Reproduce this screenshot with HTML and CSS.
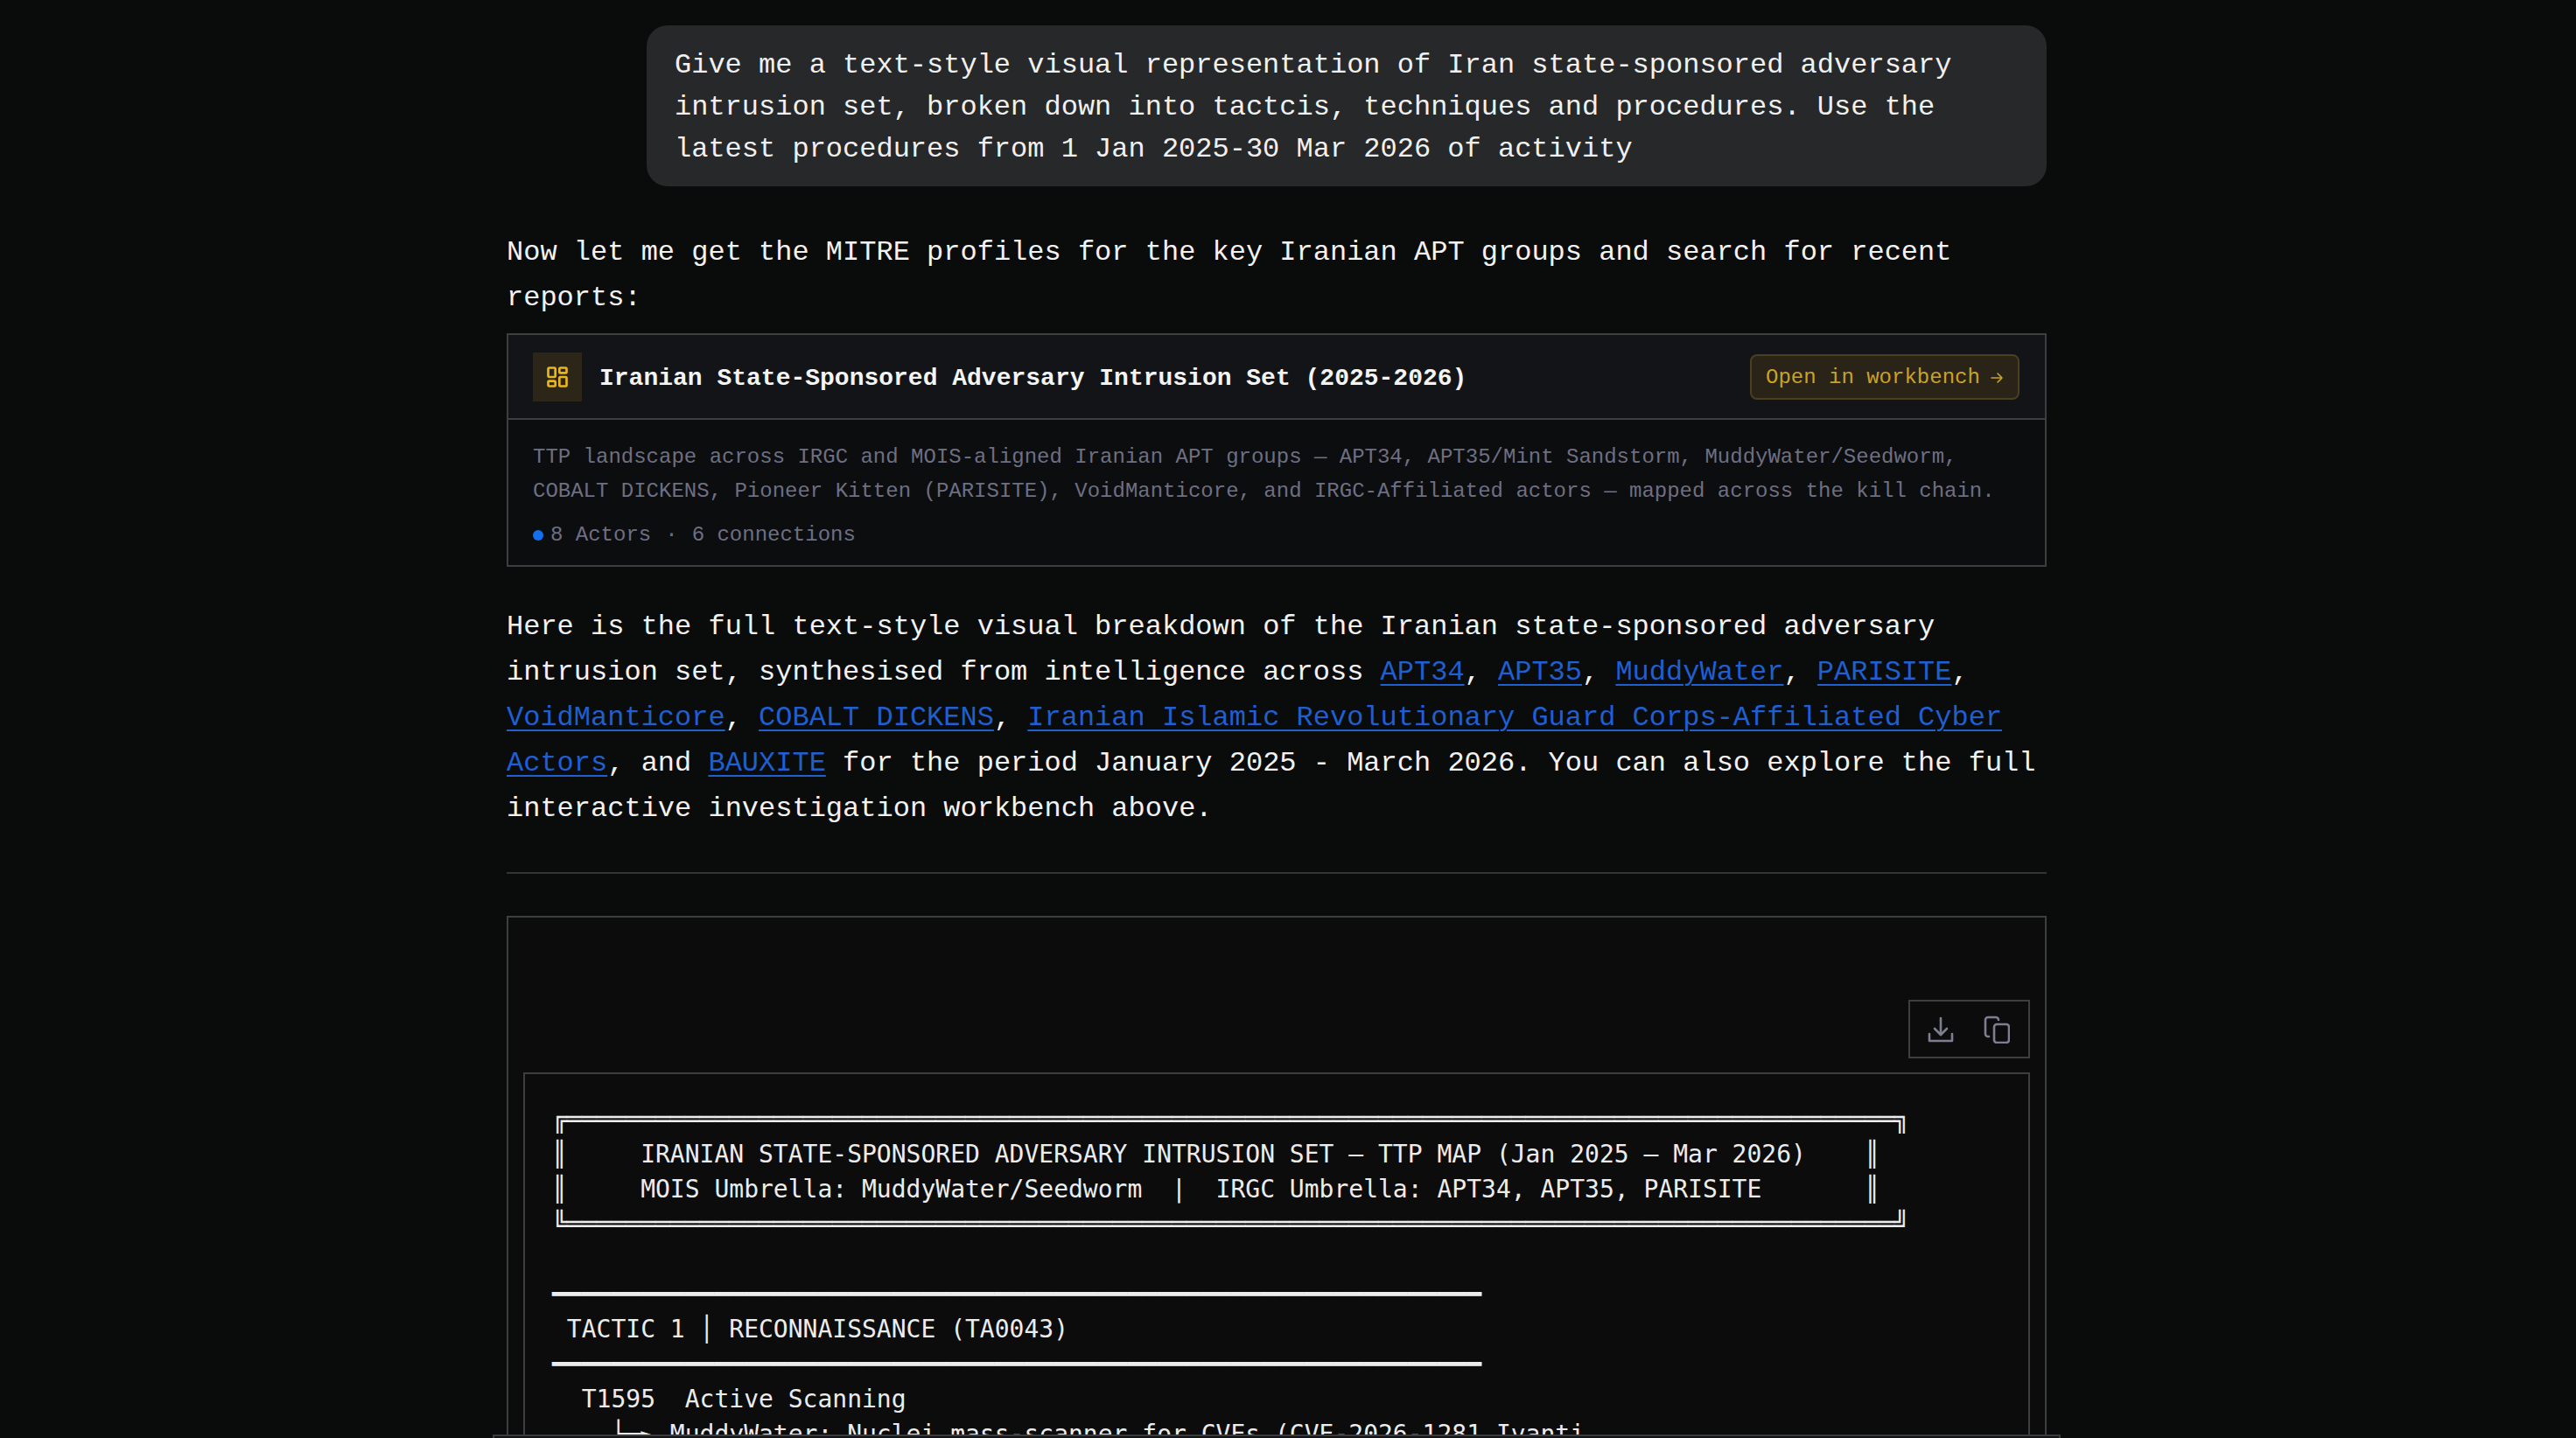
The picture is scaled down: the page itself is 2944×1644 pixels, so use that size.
FILE: index.html
```html
<!DOCTYPE html>
<html lang="en">
<head>
<meta charset="utf-8">
<title>Iranian State-Sponsored Adversary Intrusion Set</title>
<link rel="stylesheet" href="styles.css">
</head>
<body>
<main class="thread">
  <div class="user-bubble">Give me a text-style visual representation of Iran state-sponsored adversary intrusion set, broken down into tactcis, techniques and procedures. Use the latest procedures from 1 Jan 2025-30 Mar 2026 of activity</div>
  <p class="para para-intro">Now let me get the MITRE profiles for the key Iranian APT groups and search for recent reports:</p>
  <section class="card">
    <header class="card-head">
      <span class="card-icon">
        <svg width="28" height="28" viewBox="0 0 24 24" fill="none" stroke="currentColor" stroke-width="2.3" stroke-linejoin="round"><rect x="3" y="3" width="7" height="9" rx="1"/><rect x="14" y="3" width="7" height="5" rx="1"/><rect x="14" y="12" width="7" height="9" rx="1"/><rect x="3" y="16" width="7" height="5" rx="1"/></svg>
      </span>
      <h2 class="card-title">Iranian State-Sponsored Adversary Intrusion Set (2025-2026)</h2>
      <a class="card-btn">Open in workbench
        <svg width="16" height="16" viewBox="0 0 16 16" fill="none" stroke="currentColor" stroke-width="1.6" stroke-linecap="round" stroke-linejoin="round"><path d="M2 8h12M9 3l5 5-5 5"/></svg>
      </a>
    </header>
    <div class="card-body">
      <p class="card-desc">TTP landscape across IRGC and MOIS-aligned Iranian APT groups — APT34, APT35/Mint Sandstorm, MuddyWater/Seedworm, COBALT DICKENS, Pioneer Kitten (PARISITE), VoidManticore, and IRGC-Affiliated actors — mapped across the kill chain.</p>
      <div class="card-meta"><span class="dot"></span><span class="meta-actors">8 Actors</span><span>·</span><span>6 connections</span></div>
    </div>
  </section>
  <p class="para para-main">Here is the full text-style visual breakdown of the Iranian state-sponsored adversary intrusion set, synthesised from intelligence across <a class="link">APT34</a>, <a class="link">APT35</a>, <a class="link">MuddyWater</a>, <a class="link">PARISITE</a>, <a class="link">VoidManticore</a>, <a class="link">COBALT DICKENS</a>, <a class="link">Iranian Islamic Revolutionary Guard Corps-Affiliated Cyber Actors</a>, and <a class="link">BAUXITE</a> for the period January 2025 - March 2026. You can also explore the full interactive investigation workbench above.</p>
  <hr class="divider">
  <section class="code-card">
    <div class="code-tools">
      <div class="tool-box">
        <svg width="30" height="30" viewBox="0 0 30 30" fill="none" stroke="currentColor" stroke-width="2.6" stroke-linecap="round" stroke-linejoin="round"><path d="M2 20v8h26v-8"/><path d="M15 2v19"/><path d="M8 14l7 7 7-7"/></svg>
        <svg width="30" height="32" viewBox="0 0 30 32" fill="none" stroke="currentColor" stroke-width="2.6" stroke-linecap="round" stroke-linejoin="round"><rect x="12" y="10" width="17" height="21" rx="3"/><path d="M6 24H5a3 3 0 0 1-3-3V5a3 3 0 0 1 3-3h9a3 3 0 0 1 3 3"/></svg>
      </div>
    </div>
    <pre class="code-pre">╔══════════════════════════════════════════════════════════════════════════════════════════╗
║     IRANIAN STATE-SPONSORED ADVERSARY INTRUSION SET — TTP MAP (Jan 2025 — Mar 2026)    ║
║     MOIS Umbrella: MuddyWater/Seedworm  |  IRGC Umbrella: APT34, APT35, PARISITE       ║
╚══════════════════════════════════════════════════════════════════════════════════════════╝

━━━━━━━━━━━━━━━━━━━━━━━━━━━━━━━━━━━━━━━━━━━━━━━━━━━━━━━━━━━━━━━
 TACTIC 1 │ RECONNAISSANCE (TA0043)
━━━━━━━━━━━━━━━━━━━━━━━━━━━━━━━━━━━━━━━━━━━━━━━━━━━━━━━━━━━━━━━
  T1595  Active Scanning
    └─► MuddyWater: Nuclei mass-scanner for CVEs (CVE-2026-1281 Ivanti</pre>
  </section>
</main>
<div class="composer-edge"></div>
</body>
</html>
```
FILE: styles.css
```css
* { box-sizing: border-box; }
html, body { margin: 0; height: 100%; }
body {
  background: #0a0b0b;
  color: #eeeeee;
  font-family: "Liberation Mono", "DejaVu Sans Mono", monospace;
  overflow: hidden;
  position: relative;
}
.thread {
  width: 1760px;
  height: 1644px;
  margin-left: 579px;
  padding-top: 29px;
  display: flex;
  flex-direction: column;
  overflow: hidden;
}
.user-bubble {
  align-self: flex-end;
  flex: none;
  width: 1600px;
  padding: 22px 32px 18px;
  background: #26282a;
  border-radius: 24px;
  font-size: 32px;
  line-height: 48px;
  color: #f0f0f0;
}
.para {
  margin: 0;
  flex: none;
  font-size: 32px;
  line-height: 52px;
  color: #f2f2f2;
}
.para-intro { margin-top: 50px; }
.para-main { margin-top: 43px; }
.link { color: #1f5fd0; text-decoration: underline; text-underline-offset: 5px; text-decoration-thickness: 2px; }
.card {
  flex: none;
  margin-top: 14px;
  border: 2px solid #3d3e40;
  background: #0c0d0e;
}
.card-head {
  height: 97px;
  padding: 1px 29px 0 28px;
  display: flex;
  align-items: center;
  gap: 20px;
  background: #131417;
  border-bottom: 2px solid #3d3e40;
}
.card-icon {
  width: 56px;
  height: 56px;
  flex: none;
  display: flex;
  align-items: center;
  justify-content: center;
  background: #2c2619;
  color: #e8b61e;
}
.card-title {
  margin: 0;
  padding-top: 3px;
  flex: 1;
  font-size: 28px;
  font-weight: 700;
  line-height: 40px;
  color: #f4f4f4;
}
.card-btn {
  height: 52px;
  width: 308px;
  padding: 1px 16px 0;
  display: flex;
  align-items: center;
  justify-content: space-between;
  background: #2a2418;
  border: 2px solid #4a3f20;
  border-radius: 8px;
  font-size: 24px;
  color: #c9a227;
}
.card-body { padding: 23px 28px 16px; }
.card-desc {
  margin: 0;
  font-size: 24px;
  line-height: 39px;
  color: #6e6f83;
}
.card-meta {
  margin-top: 13px;
  display: flex;
  align-items: center;
  gap: 16px;
  font-size: 24px;
  line-height: 36px;
  color: #6e6f83;
}
.dot {
  width: 12px;
  height: 12px;
  margin-right: -8px;
  border-radius: 50%;
  background: #1270ee;
}
.divider {
  flex: none;
  width: 100%;
  margin: 46px 0 0;
  border: 0;
  border-top: 2px solid #333436;
}
.code-card {
  flex: none;
  margin-top: 48px;
  height: 700px;
  padding: 94px 17px 0;
  border: 2px solid #3d3e40;
  background: #0c0c0c;
}
.code-tools {
  display: flex;
  justify-content: flex-end;
  margin-bottom: 16px;
}
.tool-box {
  width: 139px;
  height: 67px;
  padding-left: 20px;
  display: flex;
  align-items: center;
  gap: 34px;
  border: 2px solid #3d3e40;
  color: #7d7e90;
}
.code-pre {
  margin: 0;
  height: 600px;
  padding: 32px 0 0 31px;
  border: 2px solid #3d3e40;
  overflow: hidden;
  font-family: "DejaVu Sans Mono", monospace;
  font-size: 28px;
  line-height: 40px;
  color: #ececec;
}
.composer-edge {
  position: absolute;
  left: 563px;
  top: 1640px;
  width: 1792px;
  height: 4px;
  background: #131416;
  border: 2px solid #3a3a3c;
  border-bottom: 0;
}
```
